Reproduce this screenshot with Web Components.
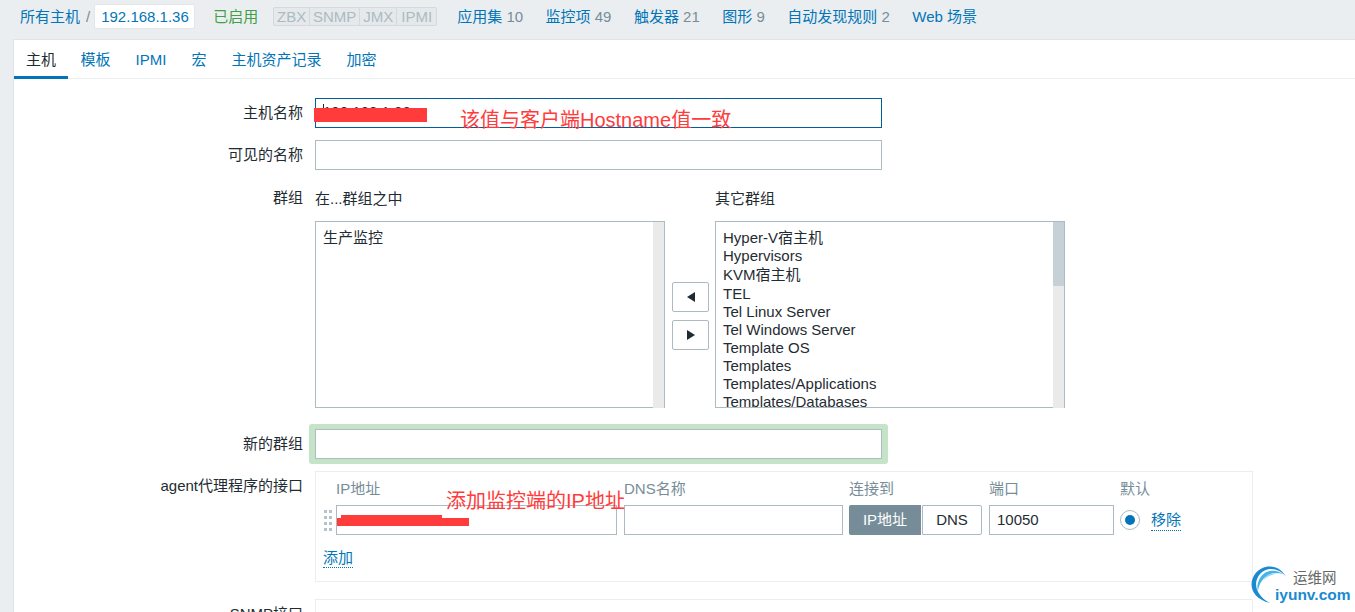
<!DOCTYPE html>
<html lang="zh"><head><meta charset="utf-8"><title>主机</title>
<style>
html,body{margin:0;padding:0;height:612px;overflow:hidden;background:#ebeef0;color:#1f2c33;font:15px/18px "Liberation Sans","Noto Sans CJK SC",sans-serif}
</style></head><body>
<zbx-topbar></zbx-topbar>
<zbx-panel>
  <zbx-tabs></zbx-tabs>
  <zbx-form>
    <zbx-row label="主机名称" gap="12"><zbx-input focused value="192.168.1.36" w="567"></zbx-input></zbx-row>
    <zbx-row label="可见的名称" gap="20"><zbx-input w="567"></zbx-input></zbx-row>
    <zbx-row label="群组" gap="21"><zbx-groups></zbx-groups></zbx-row>
    <zbx-row label="新的群组" gap="12"><zbx-highlight><zbx-input w="567"></zbx-input></zbx-highlight></zbx-row>
    <zbx-row label="agent代理程序的接口" gap="17" boxed><zbx-iface></zbx-iface></zbx-row>
    <zbx-row label="SNMP接口" gap="0" boxed><zbx-emptybox></zbx-emptybox></zbx-row>
  </zbx-form>
  <zbx-note></zbx-note>
</zbx-panel>
<zbx-mark></zbx-mark>
<script>
const def=(name,html,init)=>customElements.define(name,class extends HTMLElement{
  connectedCallback(){ if(this.shadowRoot)return;
    const r=this.attachShadow({mode:'open'}); r.innerHTML=typeof html==='function'?html(this):html; if(init)init(this,r);}
});
def('zbx-topbar',`<style>
:host{display:flex;align-items:center;height:39px;padding:0 0 6px 20px;white-space:nowrap;box-sizing:border-box}
a{color:#0275b8;text-decoration:none}
.n{color:#768d99}
.sep{color:#768d99;margin:0 4px 0 6px}
.host{display:block;background:#fff;border:1px solid #e2e6e9;border-radius:2px;height:25px;line-height:23px;padding:0 6px;box-sizing:border-box;width:101px;color:#0275b8}
.on{color:#429e47;margin-left:18px}
.badges{display:flex;margin-left:15px;margin-right:20px;height:19px}
.badges span{border:1px solid #d3d9dd;background:#e5e9eb;color:#acbbc2;line-height:17px;box-sizing:border-box;margin-left:-1px;text-align:center}
.badges span:first-child{border-radius:2px 0 0 2px;margin-left:0}
.badges span:last-child{border-radius:0 2px 2px 0}
.i{margin-right:22.5px}
</style>
<a>所有主机</a><span class="sep">/</span><a class="host">192.168.1.36</a><span class="on">已启用</span>
<div class="badges"><span style="width:37px">ZBX</span><span style="width:51px">SNMP</span><span style="width:38px">JMX</span><span style="width:41px">IPMI</span></div>
<a class="i">应用集 <span class="n">10</span></a><a class="i">监控项 <span class="n">49</span></a><a class="i">触发器 <span class="n">21</span></a><a class="i">图形 <span class="n">9</span></a><a class="i">自动发现规则 <span class="n">2</span></a><a class="i">Web 场景</a>`);
def('zbx-panel',`<style>:host{display:block;position:relative;margin-left:13px;height:573px;background:#fff;border-left:1px solid #dfe4e7;border-top:1px solid #dfe4e7;overflow:hidden}</style><slot></slot>`);
def('zbx-tabs',`<style>
:host{display:flex;height:38px;border-bottom:1px solid #ebeef0}
a{display:block;padding:0 12.5px;line-height:40px;color:#0275b8;box-sizing:border-box;height:39px;white-space:nowrap}
a.on{color:#1f2c33;border-bottom:3px solid #0275b8;padding:0 12px}
</style><a class="on">主机</a><a>模板</a><a>IPMI</a><a>宏</a><a>主机资产记录</a><a>加密</a>`);
def('zbx-form',`<style>:host{display:block;padding-top:19px}</style><slot></slot>`);
def('zbx-row',e=>`<style>
:host{display:grid;grid-template-columns:289px 1fr;column-gap:12px;margin-bottom:${e.getAttribute('gap')}px}
.l{text-align:right;line-height:30px;white-space:nowrap}
.l.g{line-height:16px}
</style><div class="l ${e.getAttribute('label')==='群组'?'g':''}">${e.getAttribute('label')}</div><div><slot></slot></div>`);
def('zbx-input',e=>`<style>
:host{display:block;width:${e.getAttribute('w')||567}px;height:30px;box-sizing:border-box;background:#fff;border:1px solid ${e.hasAttribute('focused')?'#005f99':'#acbbc2'};position:relative;padding:0 7px;line-height:${e.hasAttribute('focused')?26:28}px;overflow:hidden;white-space:nowrap}
.c{position:absolute;left:7px;top:5px;width:1px;height:10px;background:#1f2c33}
</style>${e.hasAttribute('focused')?'<span class="c"></span>':''}${e.getAttribute('value')||''}`);
def('zbx-highlight',`<style>:host{display:block;width:567px;margin:-5px -6px;padding:5px 6px;background:#c5e3c6;border-radius:3px}</style><slot></slot>`);
def('zbx-listbox',e=>{
 const items=(e.getAttribute('items')||'').split('|').map(s=>`<div class="it${s.startsWith('KVM')?' t':''}">${s}</div>`).join('');
 return `<style>
:host{display:block;position:relative;width:350px;height:187px;box-sizing:border-box;border:1px solid #acbbc2;border-bottom:0;background:#fff;overflow:hidden;padding:7px 12px 0 7px}
.it{height:18px;line-height:18px;white-space:nowrap}
.it.t{height:20px;line-height:20px}
.sb{position:absolute;right:0;top:0;bottom:0;width:11px;background:#eaeaea}
.th{height:64px;background:#c5d0d7}
.bl{position:absolute;left:0;right:11px;bottom:0;height:1px;background:#acbbc2}
</style>${items}<div class="bl"></div><div class="sb">${e.hasAttribute('thumb')?'<div class="th"></div>':''}</div>`});
def('zbx-groups',`<style>
:host{display:grid;grid-template-columns:350px 50px 350px;grid-template-rows:31px 187px;width:750px}
.h{line-height:18px}
.btns{grid-row:2;grid-column:2;display:flex;flex-direction:column;align-items:flex-start;padding:61px 0 0 7px;gap:8px;box-sizing:border-box}
button{width:37px;height:30px;box-sizing:border-box;padding:0;border:1px solid #acbbc2;border-radius:2px;background:#fff;display:flex;align-items:center;justify-content:center}
svg{display:block}
.l1{grid-row:2;grid-column:1}.l2{grid-row:2;grid-column:3}
</style>
<div class="h">在...群组之中</div><div></div><div class="h">其它群组</div>
<zbx-listbox class="l1" items="生产监控"></zbx-listbox>
<div class="btns"><button><svg width="8" height="10" viewBox="0 0 8 10"><path d="M8 0V10L0 5Z" fill="#1f2c33"/></svg></button><button><svg width="8" height="10" viewBox="0 0 8 10"><path d="M0 0V10L8 5Z" fill="#1f2c33"/></svg></button></div>
<zbx-listbox class="l2" thumb items="Hyper-V宿主机|Hypervisors|KVM宿主机|TEL|Tel Linux Server|Tel Windows Server|Template OS|Templates|Templates/Applications|Templates/Databases"></zbx-listbox>`);
def('zbx-iface',`<style>
:host{display:block;position:relative;width:938px;height:111px;box-sizing:border-box;border:1px solid #ebeef0;padding:8px 0 0 7px}
.g{display:grid;grid-template-columns:13px 281px 226px 139px 132px auto;grid-template-rows:17px 30px;row-gap:8px;justify-content:start}
.h{color:#768d99;line-height:17px;white-space:nowrap}
.c{margin-left:7px}.c6{margin-left:6px}
.hd{display:grid;grid-template-columns:3px 3px;grid-auto-rows:3px;gap:3px 2px;align-content:center;height:30px;width:8px;margin-left:1px}
.hd i{width:3px;height:3px;background:#b6c3ca}
.ip,.dns,.port{height:30px;box-sizing:border-box;border:1px solid #acbbc2;background:#fff}
.seg{display:flex;height:30px;text-align:center}
.seg span{box-sizing:border-box;height:30px}
.seg .a{width:72px;background:#768d99;color:#fff;border-radius:2px 0 0 2px;line-height:30px}
.seg .b{width:60px;margin-left:1px;border:1px solid #acbbc2;border-radius:0 2px 2px 0;line-height:28px}
.port{padding:0 7px;line-height:28px}
.def{display:flex;align-items:center;margin-left:6px}
.r{width:20px;height:20px;box-sizing:border-box;border:1px solid #acbbc2;border-radius:50%;display:flex;align-items:center;justify-content:center}
.r i{display:block;width:10px;height:10px;border-radius:50%;background:#0275b8}
a{color:#0275b8;border-bottom:1px dotted #0275b8;line-height:18px;display:block}
.def a{margin-left:11px;height:19px;margin-top:2px}
.add{display:inline-block;margin-top:14px}
</style>
<div class="g">
<div></div><div class="h">IP地址</div><div class="h c">DNS名称</div><div class="h c6">连接到</div><div class="h c">端口</div><div class="h c6">默认</div>
<div class="hd"><i></i><i></i><i></i><i></i><i></i><i></i><i></i><i></i></div>
<div class="ip"></div><div class="dns c"></div>
<div class="seg c6"><span class="a">IP地址</span><span class="b">DNS</span></div>
<div class="port c">10050</div>
<div class="def"><span class="r"><i></i></span><a>移除</a></div>
</div>
<a class="add">添加</a>`);
def('zbx-emptybox',`<style>:host{display:block;width:938px;height:60px;box-sizing:border-box;border:1px solid #ebeef0}</style>`);
def('zbx-note',`<style>
:host{display:block;position:absolute;left:0;top:0;width:1342px;height:573px;pointer-events:none}
.t{position:absolute;color:#ff3b3b;font-size:20px;line-height:24px;white-space:nowrap}
.b{position:absolute;background:#ff3b3b}
</style>
<div class="b" style="left:300px;top:68px;width:113px;height:14px"></div>
<div class="t" style="left:446px;top:68px">该值与客户端Hostname值一致</div>
<div class="b" style="left:327px;top:475px;width:101px;height:4px"></div>
<div class="b" style="left:323px;top:478px;width:132px;height:8px"></div>
<div class="t" style="left:432px;top:449px">添加监控端的IP地址</div>`);
def('zbx-mark',`<style>
:host{display:block;position:absolute;left:1245px;top:560px;width:110px;height:50px}
svg{position:absolute;left:0;top:0}
.a{position:absolute;left:48px;top:9px;font-size:14.5px;line-height:18px;color:#666;white-space:nowrap}
.b{position:absolute;left:30px;top:26px;font:bold 15.5px/18px "Liberation Sans",sans-serif;color:#1a8ad0;white-space:nowrap}
</style>
<svg width="50" height="50" viewBox="0 0 50 50">
<path d="M41 17C35 4 18 3 10 14C3 24 6 38 25 43C13 37 8 26 13 17C19 6 34 7 41 17Z" fill="#1a8ad0"/>
<path d="M38 14C30 8 18 10 14 20C12 25 12 28 13 31C14 22 22 9 38 14Z" fill="#47b4e8"/>
<path d="M33 14C27 12 21 15 18 21C22 16 27 14 33 14Z" fill="#7fcdf0"/>
</svg>
<div class="a">运维网</div><div class="b">iyunv.com</div>`);
</script>
</body></html>
